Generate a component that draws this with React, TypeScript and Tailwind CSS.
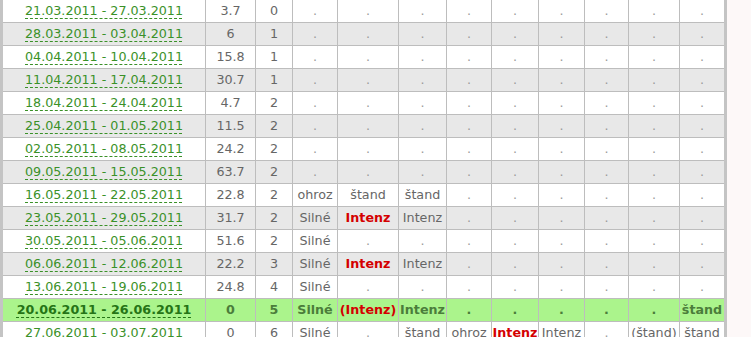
import React from "react"

type Cell = string | { t: string; red?: boolean }

const rows: { date: string; mm: string; lvl: string; cells: Cell[]; hl?: boolean }[] = [
  { date: "21.03.2011 - 27.03.2011", mm: "3.7", lvl: "0", cells: [] },
  { date: "28.03.2011 - 03.04.2011", mm: "6", lvl: "1", cells: [] },
  { date: "04.04.2011 - 10.04.2011", mm: "15.8", lvl: "1", cells: [] },
  { date: "11.04.2011 - 17.04.2011", mm: "30.7", lvl: "1", cells: [] },
  { date: "18.04.2011 - 24.04.2011", mm: "4.7", lvl: "2", cells: [] },
  { date: "25.04.2011 - 01.05.2011", mm: "11.5", lvl: "2", cells: [] },
  { date: "02.05.2011 - 08.05.2011", mm: "24.2", lvl: "2", cells: [] },
  { date: "09.05.2011 - 15.05.2011", mm: "63.7", lvl: "2", cells: [] },
  { date: "16.05.2011 - 22.05.2011", mm: "22.8", lvl: "2", cells: ["ohroz", "štand", "štand"] },
  { date: "23.05.2011 - 29.05.2011", mm: "31.7", lvl: "2", cells: ["Silné", { t: "Intenz", red: true }, "Intenz"] },
  { date: "30.05.2011 - 05.06.2011", mm: "51.6", lvl: "2", cells: ["Silné"] },
  { date: "06.06.2011 - 12.06.2011", mm: "22.2", lvl: "3", cells: ["Silné", { t: "Intenz", red: true }, "Intenz"] },
  { date: "13.06.2011 - 19.06.2011", mm: "24.8", lvl: "4", cells: ["Silné"] },
  {
    date: "20.06.2011 - 26.06.2011",
    mm: "0",
    lvl: "5",
    hl: true,
    cells: ["Silné", { t: "(Intenz)", red: true }, "Intenz", ".", ".", ".", ".", ".", "štand"],
  },
  {
    date: "27.06.2011 - 03.07.2011",
    mm: "0",
    lvl: "6",
    cells: ["Silné", ".", "štand", "ohroz", { t: "Intenz", red: true }, "Intenz", ".", "(štand)", "štand"],
  },
]

export default function App() {
  return (
    <div className="min-h-[337px] w-[751px] overflow-hidden bg-[#fdf8f8]" style={{ height: 337 }}>
      <div
        className="w-[727px] border-x-[3px] border-[#c4c4c4] bg-white text-[12.7px] text-[#666]"
        style={{ fontFamily: '"DejaVu Sans", Verdana, sans-serif' }}
      >
        {rows.map((r, i) => {
          const cells: Cell[] = Array.from({ length: 9 }, (_, k) => r.cells[k] ?? ".")
          const bg = r.hl ? "bg-[#abf48c]" : i % 2 === 1 ? "bg-[#e8e8e8]" : "bg-white"
          return (
            <div
              key={r.date}
              className={`grid h-[23px] grid-cols-[203px_50px_37px_45px_61px_48px_45px_47px_46px_44px_51px_44px] border-b border-[#bdbdbd] ${bg} ${r.hl ? "font-bold text-[#4b7d3b]" : ""}`}
            >
              <div className="flex items-center justify-center border-r border-[#bdbdbd]">
                <span
                  className={`underline decoration-dashed decoration-1 underline-offset-[3px] ${r.hl ? "text-[#257416] decoration-[#257416]" : "text-[#3a9128] decoration-[#3a9128]"}`}
                >
                  {r.date}
                </span>
              </div>
              <div className="flex items-center justify-center border-r border-[#bdbdbd]">{r.mm}</div>
              <div className="flex items-center justify-center border-r border-[#bdbdbd]">{r.lvl}</div>
              {cells.map((c, k) => {
                const txt = typeof c === "string" ? c : c.t
                const red = typeof c !== "string" && c.red
                const dot = txt === "."
                return (
                  <div
                    key={k}
                    className={`flex items-center justify-center ${k < 8 ? "border-r border-[#bdbdbd]" : ""} ${red ? "font-bold text-[#d40000]" : ""} ${dot && !r.hl ? "text-[#9a9a9a]" : ""}`}
                  >
                    {txt}
                  </div>
                )
              })}
            </div>
          )
        })}
      </div>
    </div>
  )
}
